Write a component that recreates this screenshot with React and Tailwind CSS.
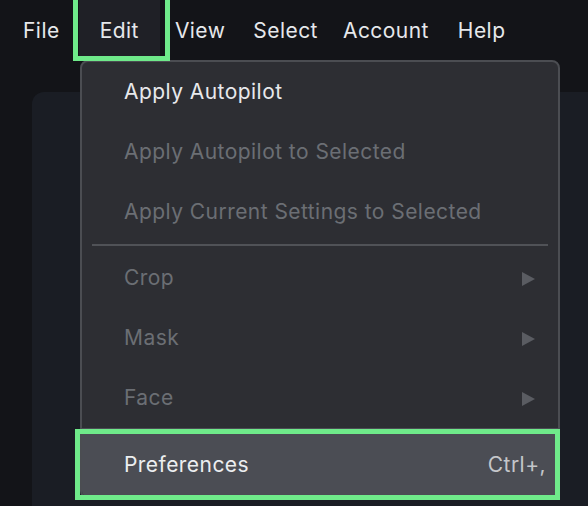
export default function App() {
  const menus = [
    { name: "File", cls: "pl-[23px] pr-[19px]" },
    { name: "Edit", cls: "px-[21px] bg-[#1f2026]" },
    { name: "View", cls: "pl-[15px] pr-[14px]" },
    { name: "Select", cls: "pl-[14px] pr-[12px]" },
    { name: "Account", cls: "pl-[13px] pr-[16px]" },
    { name: "Help", cls: "pl-[13px] pr-[14px]" },
  ];

  const items = [
    { label: "Apply Autopilot", enabled: true },
    { label: "Apply Autopilot to Selected" },
    { label: "Apply Current Settings to Selected" },
    { sep: true },
    { label: "Crop", sub: true },
    { label: "Mask", sub: true },
    { label: "Face", sub: true },
  ];

  return (
    <div className="relative w-[588px] h-[506px] overflow-hidden bg-[#131418] font-['Inter','Noto_Sans',sans-serif] text-[21px] tracking-[0.45px]">
      {/* Menu bar */}
      <div className="flex h-[60px] items-stretch">
        {menus.map((m) => (
          <div key={m.name} className={`flex items-center pt-[2px] text-[#e6e8eb] ${m.cls}`}>
            {m.name}
          </div>
        ))}
      </div>

      {/* Workspace panel behind the menu */}
      <div className="h-[446px] pl-[32px] pt-[32px]">
        <div className="h-full rounded-tl-[12px] bg-[#1a1d24]" />
      </div>

      {/* Edit dropdown */}
      <div className="absolute left-[80px] top-[60px] w-[480px] h-[439px] overflow-hidden rounded-[8px] border-2 border-[#4b4d52] bg-[#2d2e33]">
        {items.map((it, i) =>
          it.sep ? (
            <div key={i} className="mx-[10px] my-[2px] h-[2px] bg-[#505257]" />
          ) : (
            <div key={i} className="flex h-[60px] items-center justify-between pl-[42px] pr-[23px]">
              <span className={it.enabled ? "text-[#e8e9ec]" : "text-[#6b6e74]"}>{it.label}</span>
              {it.sub && (
                <svg width="13" height="14" viewBox="0 0 13 14" className="mt-[1px]">
                  <polygon points="0,0 13,7 0,14" fill="#5a5c62" />
                </svg>
              )}
            </div>
          )
        )}
        <div className="flex h-[70px] items-center justify-between bg-[#4b4d54] pl-[42px] pr-[12px] pt-[3px]">
          <span className="text-[#eceef0]">Preferences</span>
          <span className="text-[#c4c6ca]">Ctrl+,</span>
        </div>
      </div>

      {/* Highlight annotations */}
      <div className="absolute left-[73px] top-[-5px] w-[97px] h-[66px] border-[5px] border-[#6fea8a]" />
      <div className="absolute left-[75px] top-[429px] w-[485px] h-[71px] border-[5px] border-[#6fea8a]" />
    </div>
  );
}
